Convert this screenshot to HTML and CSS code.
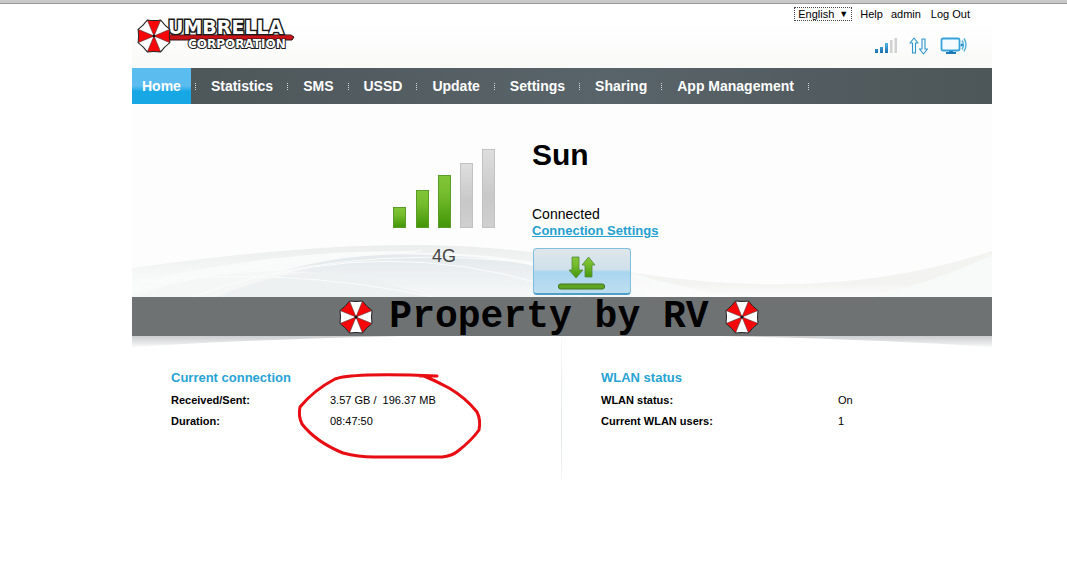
FILE: index.html
```html
<!DOCTYPE html>
<html lang="en">
<head>
<meta charset="utf-8">
<title>Umbrella Corporation - Home</title>
<link rel="stylesheet" href="styles.css">
</head>
<body>
<svg class="defs" aria-hidden="true">
  <defs>
    <symbol id="umbrella" viewBox="-18 -18 36 36">
      <path d="M-6.500-16Q0-15 6.500-16Q10-11 16-6.500Q15 0 16 6.500Q10 11 6.500 16Q0 15-6.500 16Q-10 11-16 6.500Q-15 0-16-6.500Q-10-11-6.500-16Z" fill="#fff"/>
      <path d="M0 0L6.500-16Q10-11 16-6.500ZM0 0L16 6.500Q10 11 6.500 16ZM0 0L-6.500 16Q-10 11-16 6.500ZM0 0L-16-6.500Q-10-11-6.500-16Z" fill="#f5070a"/>
      <path d="M-6.500-16L6.500 16M6.500-16L-6.500 16M-16-6.500L16 6.500M-16 6.500L16-6.500" stroke="#533" stroke-width=".6"/>
      <path d="M-6.500-16Q0-15 6.500-16Q10-11 16-6.500Q15 0 16 6.500Q10 11 6.500 16Q0 15-6.500 16Q-10 11-16 6.500Q-15 0-16-6.500Q-10-11-6.500-16Z" fill="none" stroke="#222" stroke-width="1"/>
      <circle r="1.500" fill="#111"/>
    </symbol>
    <linearGradient id="green" x1="0" y1="0" x2="0" y2="1">
      <stop offset="0" stop-color="#80c537"/><stop offset=".35" stop-color="#76bd2e"/><stop offset="1" stop-color="#419507"/>
    </linearGradient>
    <linearGradient id="grey" x1="0" y1="0" x2="0" y2="1">
      <stop offset="0" stop-color="#dedede"/><stop offset=".6" stop-color="#c8c8c8"/><stop offset="1" stop-color="#d0d0d0"/>
    </linearGradient>
    <linearGradient id="blue" x1="0" y1="0" x2="0" y2="1">
      <stop offset="0" stop-color="#4fb6e4"/><stop offset="1" stop-color="#1a6fb0"/>
    </linearGradient>
  </defs>
</svg>
<div class="chrome-edge"></div>
<div class="page">
  <header class="header">
    <a class="logo" href="#" aria-label="Umbrella Corporation">
      <svg width="164" height="42" viewBox="0 0 164 42">
        <path d="M36 20H159L162 22L160 25H36Z" fill="#c81318" stroke="#311" stroke-width="1"/>
        <text class="logo-main" x="36" y="19">UMBRELLA</text>
        <text class="logo-sub" x="56" y="33">CORPORATION</text>
        <path d="M37 22H160" stroke="#c81318" stroke-width="3"/>
        <use href="#umbrella" x="4" y="3" width="36" height="36" transform="rotate(45 22 21)"/>
      </svg>
    </a>
    <div class="tools">
      <div class="links">
        <label class="language"><select aria-label="Language"><option>English</option></select><span class="caret">▼</span></label>
        <a href="#">Help</a>
        <a href="#">admin</a>
        <a class="logout" href="#">Log Out</a>
      </div>
      <div class="status">
        <svg width="24" height="18" viewBox="0 0 24 18">
          <path d="M1 12h3v4h-3zM6 10h3v6h-3zM11 6h3v10h-3z" fill="url(#blue)"/>
          <path d="M16 3h2.500v13h-2.500zM20.500 1h2.500v15h-2.500z" fill="#cfd1d2"/>
        </svg>
        <svg width="20" height="18" viewBox="0 0 20 18">
          <path d="M5 1L9 6H6.500V16H3.500V6H1ZM14.500 17L10.500 12H13V2H16V12H18.500Z" fill="#f4fbff" stroke="#2e95c8" stroke-width="1.100" stroke-linejoin="round"/>
        </svg>
        <svg width="28" height="18" viewBox="0 0 28 18">
          <rect x="1.500" y="1.500" width="18" height="12" rx="1.500" fill="#f4fbff" stroke="#35a3d9" stroke-width="1.800"/>
          <path d="M9 14h4v1h3v2H6v-2h3z" fill="#1f79b5"/>
          <circle cx="22" cy="8" r="1.500" fill="#2288c4"/>
          <path d="M22 3.500q3 4.500 0 9M24 1.500q4 6 0 13" fill="none" stroke="#55b1dc" stroke-width="1.500"/>
        </svg>
      </div>
    </div>
  </header>
  <nav class="nav">
    <a class="active" href="#">Home</a>
    <a href="#">Statistics</a>
    <a href="#">SMS</a>
    <a href="#">USSD</a>
    <a href="#">Update</a>
    <a href="#">Settings</a>
    <a href="#">Sharing</a>
    <a href="#">App Management</a>
  </nav>
  <main>
    <section class="hero">
      <svg class="waves" viewBox="0 0 860 68" preserveAspectRatio="none" aria-hidden="true">
        <defs>
          <linearGradient id="w1" x1="0" y1="0" x2="0" y2="1"><stop offset="0" stop-color="#eceeee"/><stop offset=".6" stop-color="#f7f8f8"/><stop offset="1" stop-color="#fcfcfc"/></linearGradient>
          <linearGradient id="w2" x1="0" y1="0" x2="0" y2="1"><stop offset="0" stop-color="#e3e9ec"/><stop offset="1" stop-color="#f6f8f8"/></linearGradient>
          <linearGradient id="w3" x1="0" y1="0" x2="0" y2="1"><stop offset="0" stop-color="#f3f3f2"/><stop offset=".7" stop-color="#f3f3f2"/><stop offset="1" stop-color="#fcfcfc"/></linearGradient>
        </defs>
        <path d="M480 40Q690 78 860 22V68H480Z" fill="url(#w3)"/>
        <path d="M740 68Q810 50 860 26V68Z" fill="#f8f9f9"/>
        <path d="M0 39Q170 15 290 16Q430 18 520 50Q560 60 600 68H0Z" fill="url(#w1)"/>
        <path d="M0 53Q180 16 290 24Q420 24 520 68H0Z" fill="#f9fafa"/>
        <path d="M85 68Q180 20 300 26Q410 28 500 68Z" fill="url(#w2)"/>
        <path d="M0 65Q90 36 200 44Q260 54 300 68H0Z" fill="#f5f6f6"/>
        <path d="M85 68Q170 30 240 50L300 68Z" fill="#edf1f2"/>
        <path d="M0 66Q140 24 290 22M0 54Q150 36 300 68M60 68Q200 16 380 32T540 68M140 46Q290 10 450 68" fill="none" stroke="#fbfcfc"/>
      </svg>
      <div class="signal">
        <svg width="104" height="80" viewBox="0 0 104 80" role="img" aria-label="Signal strength">
          <g fill="url(#green)" stroke="#5b9c29">
            <rect x="1.500" y="58.500" width="12" height="20"/><rect x="24.500" y="41.500" width="12" height="37"/><rect x="46.500" y="26.500" width="12" height="52"/>
          </g>
          <g fill="url(#grey)" stroke="#c2c2c2">
            <rect x="68.500" y="14.500" width="12" height="64"/><rect x="90.500" y=".5" width="12" height="78"/>
          </g>
        </svg>
        <span>4G</span>
      </div>
      <div class="network">
        <h1>Sun</h1>
        <p>Connected</p>
        <a href="#">Connection Settings</a>
        <button type="button" aria-label="Toggle connection">
          <svg width="52" height="38" viewBox="0 0 52 38">
            <path d="M16 5H23V18H27L20 26L13 18H16ZM29 25H36V13H39L32.500 5L26 13H29Z" fill="url(#green)" stroke="#568b3c" stroke-width=".8"/>
            <rect x="2.500" y="32" width="46" height="5" rx="2" fill="#5ea524" stroke="#3f741d"/>
          </svg>
        </button>
      </div>
    </section>
    <div class="band">
      <svg width="36" height="36" aria-hidden="true"><use href="#umbrella"/></svg>
      <span>Property by RV</span>
      <svg width="36" height="36" aria-hidden="true"><use href="#umbrella"/></svg>
    </div>
    <div class="details">
      <svg class="fringe" viewBox="0 0 860 12" preserveAspectRatio="none" aria-hidden="true">
        <defs><linearGradient id="f" x1="0" y1="0" x2="0" y2="1"><stop offset="0" stop-color="#cbcdce"/><stop offset="1" stop-color="#f8f8f8"/></linearGradient></defs>
        <path d="M0 0H270Q130 3 0 11ZM590 0H860V11Q740 3 590 0Z" fill="url(#f)"/>
      </svg>
      <section>
        <h2>Current connection</h2>
        <dl class="connection">
          <dt>Received/Sent:</dt><dd>3.57 GB /&nbsp; 196.37 MB</dd>
          <dt>Duration:</dt><dd>08:47:50</dd>
        </dl>
        <svg class="marker" width="190" height="92" viewBox="0 0 190 92" aria-hidden="true">
          <path d="M143 6H126M143 6Q100 4 74 5Q48 6 41 9Q20 20 6 37Q4 46 8 54Q22 72 49 83Q64 87 80 87H148Q158 86 164 81Q178 70 185 60Q187 50 183 42Q172 28 155 18Q142 11 130 6" fill="none" stroke="#e80d12" stroke-width="3" stroke-linecap="round" stroke-linejoin="round"/>
        </svg>
      </section>
      <section class="wlan">
        <h2>WLAN status</h2>
        <dl>
          <dt>WLAN status:</dt><dd>On</dd>
          <dt>Current WLAN users:</dt><dd>1</dd>
        </dl>
      </section>
    </div>
  </main>
</div>
</body>
</html>
```
FILE: styles.css
```css
* { box-sizing: border-box; }
body {
  margin: 0;
  background: #fff;
  color: #000;
  font: 11px/16px Arial, "Liberation Sans", sans-serif;
}
h1, h2, p, dl, dd { margin: 0; }
a { color: inherit; text-decoration: none; }
svg { display: block; }
.defs { position: absolute; width: 0; height: 0; }
.chrome-edge { height: 4px; background: #c9c9c9; border-bottom: 1px solid #999; }
.page { max-width: 1067px; padding: 0 75px 0 132px; }

.header {
  display: flex;
  justify-content: space-between;
  height: 64px;
  background: linear-gradient(#fff 30%, #f9f9f8);
}
.logo { padding-top: 11px; }
.logo text {
  font-family: "DejaVu Sans", sans-serif;
  font-weight: bold;
  fill: #fff;
  stroke: #1a1a1a;
  stroke-width: 2px;
  paint-order: stroke;
}
.logo .logo-main { font-size: 19px; stroke-width: 3px; }
.logo-sub { font-size: 12px; }
.tools { display: flex; flex-direction: column; align-items: flex-end; }
.links { display: flex; align-items: center; gap: 8px; padding: 2px 22px 0 0; }
.links .logout { margin-left: 2px; }
.language { position: relative; display: flex; }
.language select {
  appearance: none;
  width: 58px;
  height: 14px;
  padding: 0 3px;
  border: 1px dotted #444;
  border-radius: 0;
  background: #fff;
  color: #000;
  font: inherit;
  line-height: 12px;
}
.caret { position: absolute; right: 4px; top: 0; font-size: 9px; line-height: 14px; pointer-events: none; }
.status { display: flex; gap: 11px; padding: 15px 24px 0 0; }

.nav {
  display: flex;
  height: 36px;
  background: linear-gradient(90deg, #4c5557, #59646a 55%, #4d5658);
  color: #fff;
  font-size: 14px;
  font-weight: bold;
  line-height: 36px;
}
.nav a { position: relative; padding: 0 15px; }
.nav a.active { margin-right: 5px; padding: 0 10px; background: linear-gradient(#5bbcf0 50%, #16a7e4 65%); }
.nav a::after {
  content: "";
  position: absolute;
  right: 0;
  top: 15px;
  height: 7px;
  border-right: 1px dotted #d5dadb;
}
.nav a.active::after { right: -5px; }

.hero { position: relative; display: flex; height: 193px; background: #fdfdfd; }
.waves { position: absolute; left: 0; bottom: 0; width: 100%; height: 68px; }
.signal {
  position: relative;
  display: flex;
  flex-direction: column;
  align-items: flex-end;
  width: 400px;
  padding: 45px 36px 0 0;
}
.signal span { width: 104px; padding-top: 12px; text-align: center; font-size: 18px; line-height: 30px; color: #444; }
.network { position: relative; display: flex; flex-direction: column; align-items: flex-start; padding-top: 32px; }
.network h1 { padding-bottom: 32px; font-size: 30px; line-height: 38px; }
.network p { font-size: 14px; }
.network a { color: #26a0d0; font-size: 13px; line-height: 18px; font-weight: bold; text-decoration: underline; }
.network button {
  display: flex;
  justify-content: center;
  align-items: center;
  width: 98px;
  height: 47px;
  margin: 8px 0 0 1px;
  padding: 0;
  border: 1px solid #7fbedd;
  border-bottom: 2px solid #4d9fc6;
  border-radius: 4px;
  background: linear-gradient(#dfe7eb, #cfe0ea 47%, #a9d5ef 52%, #bedef0);
}

.band {
  display: flex;
  justify-content: center;
  align-items: center;
  gap: 15px;
  height: 39px;
  padding-right: 26px;
  background: #6f7273;
  font: bold 38px/36px "Courier New", "Liberation Mono", monospace;
}
.details { position: relative; display: grid; grid-template-columns: 429px 1fr; height: 144px; }
.fringe { position: absolute; left: 0; top: 0; width: 100%; height: 12px; }
.details section { position: relative; padding: 34px 0 0 39px; }
.details h2 { padding-bottom: 4px; color: #27a3d5; font-size: 13px; line-height: 16px; }
.details dl { display: grid; grid-template-columns: 237px 1fr; line-height: 21px; }
.details dl.connection { grid-template-columns: 159px 1fr; }
.details dt { font-weight: bold; }
.details .wlan {
  border-left: 1px solid;
  border-image: linear-gradient(#f8f8f8, #e2e6e6 70%, #f6f6f6) 1;
}
.marker { position: absolute; left: 162px; top: 34px; }
```
